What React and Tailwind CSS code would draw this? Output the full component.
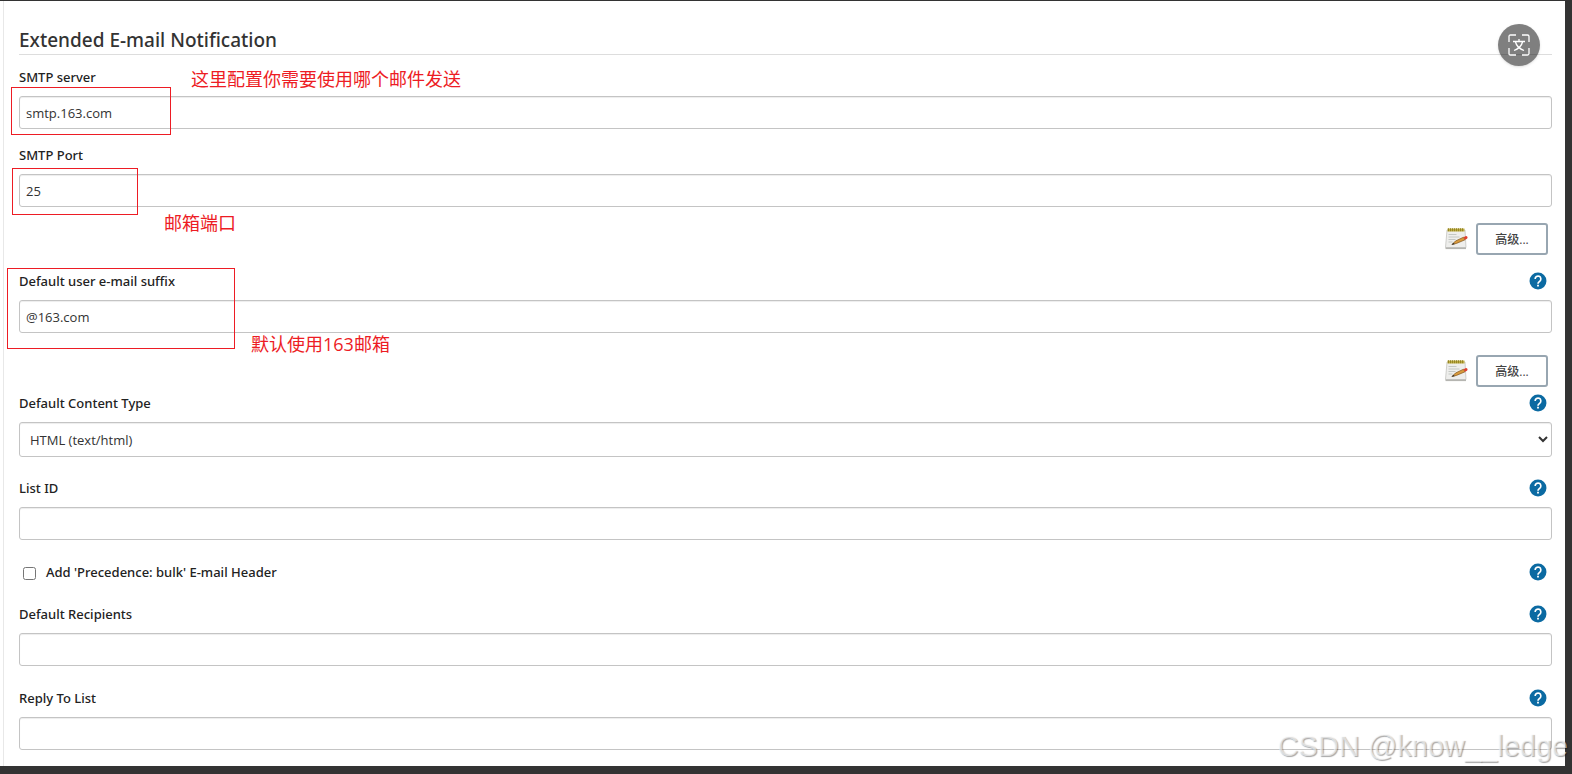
const NOTES = [
  { text: '这里配置你需要使用哪个邮件发送', place: 'left-[191px] top-[65px]' },
  { text: '邮箱端口', place: 'left-[164px] top-[209px]' },
  { text: '默认使用163邮箱', place: 'left-[251px] top-[330px]' },
]

const FRAMES = [
  'left-[11px] top-[87px] h-12 w-40',
  'left-3 top-[168px] h-[47px] w-[126px]',
  'left-[7px] top-[268px] h-[81px] w-[228px]',
]

const LABEL = "pt-px font-['Noto_Sans',sans-serif] text-[13px] font-medium text-[#222]"

const CONTROL =
  'block w-full rounded-[3px] border border-[#c4c4c4] bg-white text-[13px] text-[#333] shadow-[inset_0_1px_1px_rgba(0,0,0,0.075)]'

function HelpButton({ topic }) {
  return (
    <button type="button" aria-label={`Help for ${topic}`} className="mr-[5px] mb-0.5 size-[18px]">
      <svg viewBox="0 0 24 24" className="size-full">
        <circle cx="12" cy="12" r="11.3" fill="#0b6aa2" />
        <path
          d="M8.200 9.200a3.800 3.800 0 1 1 6.300 2.900c-1.400 1.200-2.500 1.700-2.500 3.400"
          fill="none"
          stroke="#fff"
          strokeWidth="2.200"
        />
        <path d="M10.800 17h2.400v2.400h-2.400z" fill="#fff" />
      </svg>
    </button>
  )
}

function FieldHeader({ id, label, help }) {
  return (
    <div className="mb-2 flex h-[21px] items-center justify-between">
      <label htmlFor={id} className={LABEL}>
        {label}
      </label>
      {help && <HelpButton topic={label} />}
    </div>
  )
}

function TextField({ id, label, value = '', help = false, className = '' }) {
  return (
    <div className={className}>
      <FieldHeader id={id} label={label} help={help} />
      <input id={id} type="text" defaultValue={value} className={`${CONTROL} h-[33px] px-1.5`} />
    </div>
  )
}

function NotepadIcon() {
  return (
    <svg viewBox="0 0 24 24" className="size-6" aria-hidden="true">
      <path d="M3 3h18l1 17.500H1.500z" fill="#eeeeec" stroke="#c4c4c0" strokeWidth=".8" />
      <path d="M1.500 20.500H22v1.600H1.500z" fill="#b5b5b1" />
      <path d="M3.500 1.500H20.500v3H3.500z" fill="#bfae45" />
      <path
        d="M4.500 1.200v3m2-3v3m2-3v3m2-3v3m2-3v3m2-3v3m2-3v3m2-3v3"
        stroke="#8a7a1c"
        strokeWidth=".8"
      />
      <path d="M4.500 7.500h8m-8 2.500h11m-11 2.500h7m-7 2.500h4" stroke="#c4c8c4" />
      <path d="M8 17.500 11.500 14l8-3.800 1.500 2.600-8.500 3.600z" fill="#d99a3c" stroke="#80551c" strokeWidth=".7" />
      <path d="m7.500 17.800 2-2 1.200 1.500z" fill="#333" />
      <path d="m19.500 10.200 2-1c1.800-.6 2.700 1.600 1.500 2.500l-2 1.100z" fill="#e0402f" />
    </svg>
  )
}

function AdvancedRow({ className }) {
  return (
    <div className={`flex items-center justify-end gap-2 pr-1 ${className}`}>
      <NotepadIcon />
      <button
        type="button"
        className="h-8 w-[72px] rounded-[3px] border-2 border-[#98a6b1] bg-white pt-0.5 text-xs font-medium text-[#444]"
      >
        高级...
      </button>
    </div>
  )
}

function TranslateButton() {
  return (
    <button
      type="button"
      aria-label="Translate"
      className="absolute top-6 right-8 flex size-[42px] items-center justify-center rounded-full bg-black/50 shadow-sm"
    >
      <svg viewBox="0 0 22 22" className="size-[22px]" fill="none" stroke="#fff" strokeWidth="1.300">
        <path d="M1 8V2.500Q1 1 2.500 1H8M14 1h5.500Q21 1 21 2.500V8M21 14v5.500q0 1.500-1.500 1.500H14M8 21H2.500Q1 21 1 19.500V14" />
        <path d="M5 7.500h12M11 5v2.500M7.500 8c.8 3.500 4 6.800 8.500 8.500M14.500 8c-.8 3.500-4 6.800-8.500 8.500" />
      </svg>
    </button>
  )
}

export default function App() {
  return (
    <div className="relative min-h-screen overflow-hidden bg-[#333] pt-px pr-[7px] font-['Open_Sans','Noto_Sans_CJK_SC',sans-serif] text-[#333]">
      <main className="border-l-[3px] border-white bg-white">
        <form className="border-l border-[#e8e8e8] pt-[25px] pr-[13px] pb-4 pl-[15px]">
          <h1 className="mb-3 border-b border-[#ddd] font-['Noto_Sans',sans-serif] text-[19px] leading-7 font-medium">
            Extended E-mail Notification
          </h1>
          <TextField id="smtp-server" label="SMTP server" value="smtp.163.com" />
          <TextField id="smtp-port" label="SMTP Port" value="25" className="mt-4" />
          <AdvancedRow className="mt-4" />
          <TextField id="suffix" label="Default user e-mail suffix" value="@163.com" help className="mt-4" />
          <AdvancedRow className="mt-[22px]" />

          <div className="mt-1.5">
            <FieldHeader id="content-type" label="Default Content Type" help />
            <select id="content-type" className={`${CONTROL} h-[35px] px-1.5`}>
              <option>HTML (text/html)</option>
              <option>Plain Text (text/plain)</option>
            </select>
          </div>

          <TextField id="list-id" label="List ID" help className="mt-[21px]" />
          <div className="mt-[22px] flex h-[21px] items-center justify-between">
            <label className={`flex items-center gap-2.5 pl-1 ${LABEL}`}>
              <input type="checkbox" className="size-[13px]" />
              Add 'Precedence: bulk' E-mail Header
            </label>
            <HelpButton topic="Precedence header" />
          </div>
          <TextField id="recipients" label="Default Recipients" help className="mt-[21px]" />
          <TextField id="reply-to" label="Reply To List" help className="mt-[22px]" />
        </form>
      </main>

      {FRAMES.map((frame) => (
        <div key={frame} className={`pointer-events-none absolute border border-[#ed1c24] ${frame}`} />
      ))}
      {NOTES.map((note) => (
        <p key={note.text} className={`absolute text-lg whitespace-nowrap text-[#ed1c24] ${note.place}`}>
          {note.text}
        </p>
      ))}

      <TranslateButton />
      <p className="pointer-events-none absolute right-1 bottom-1.5 font-['Liberation_Sans',sans-serif] text-[29px] text-white/60 [text-shadow:1px_1px_1px_rgba(0,0,0,0.35)]">
        CSDN @know__ledge
      </p>
    </div>
  )
}
